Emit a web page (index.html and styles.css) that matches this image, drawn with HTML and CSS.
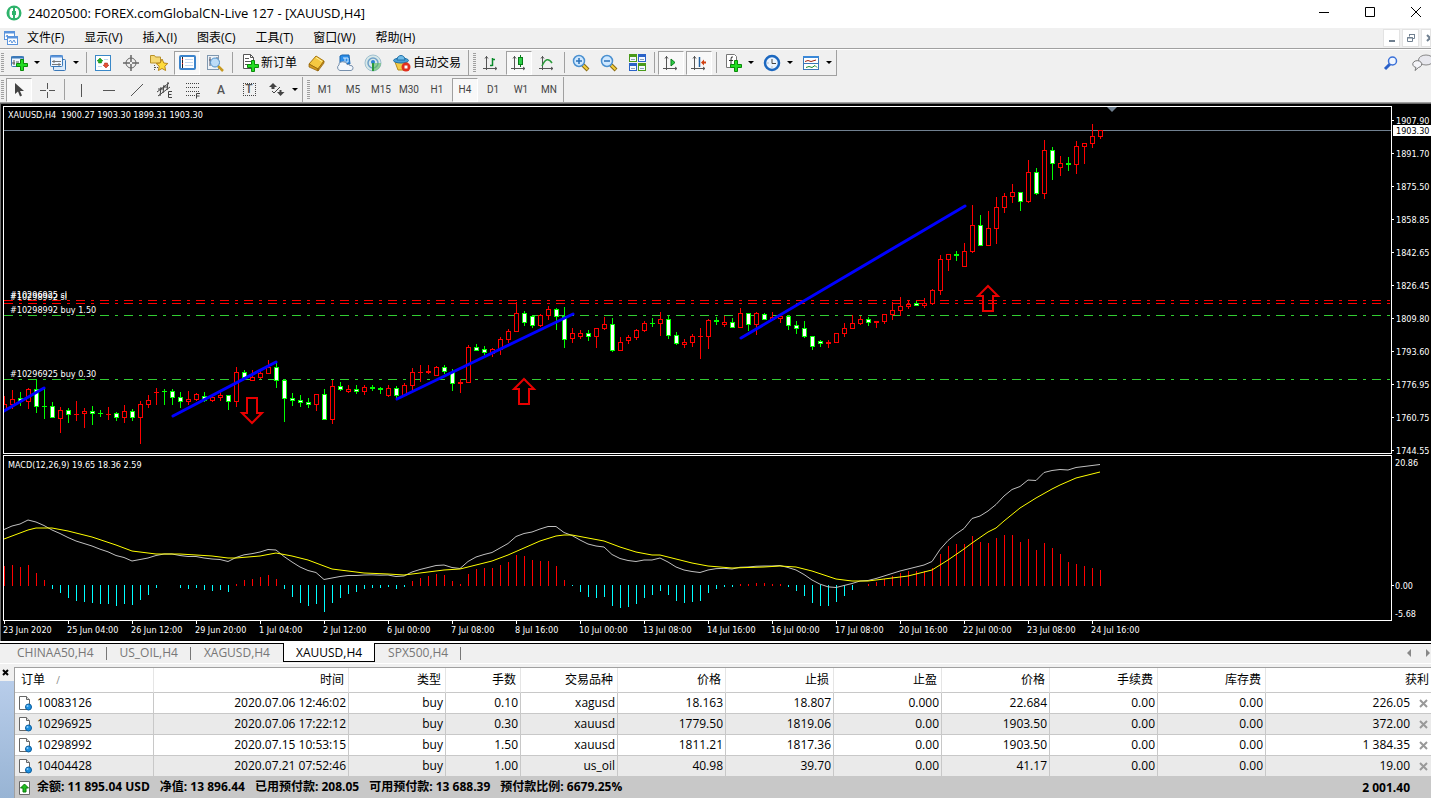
FILE: index.html
```html
<!DOCTYPE html>
<html lang="zh-CN">
<head>
    <meta charset="UTF-8">
    <title>24020500: FOREX.comGlobalCN-Live 127 - [XAUUSD,H4]</title>
    <link rel="stylesheet" href="styles.css">
</head>
<body>
    <svg class="defs" width="0" height="0">
        <symbol id="order" viewBox="0 0 14 16">
            <path d="M1.500 1.500h7l3 3v10h-10z" fill="#fff" stroke="#666"/>
            <path d="M8.500 1.500v3h3" fill="#ddd" stroke="#666"/>
            <circle cx="10.500" cy="12" r="3" fill="#1e90e0" stroke="#0a5c9c"/>
            <circle cx="9.500" cy="11" r="1" fill="#8cd0ff"/>
        </symbol>
        <symbol id="plus" viewBox="0 0 12 12">
            <path d="M4.500 .5h3v4h4v3h-4v4h-3v-4h-4v-3h4z" fill="#22dd22" stroke="#0a8a0a"/>
        </symbol>
        <symbol id="axes" viewBox="0 0 16 16">
            <path d="M3.500 1v14M0 13.500h14M2 3.500l1.500-2 1.500 2M12 12l2 1.500-2 1.500" fill="none" stroke="#555"/>
        </symbol>
        <symbol id="lens" viewBox="0 0 18 18">
            <path d="M11 11l5 5" stroke="#8a6a10" stroke-width="4"/>
            <path d="M11 11l4.500 4.500" stroke="#f5d040" stroke-width="2"/>
            <circle cx="7" cy="7" r="5.500" fill="#cfe8ff" stroke="#4a90d0" stroke-width="1.500"/>
        </symbol>
    </svg>

    <div class="title-bar">
        <svg width="16" height="16" viewBox="0 0 16 16">
            <circle cx="8" cy="8" r="7.500" fill="#2eb36b"/>
            <path d="M9 3c3 0 4 2 4 5s-1 5-4 5z" fill="#fff"/>
            <path d="M7 3c-3 0-3.500 2-3.500 5s.5 5 3.500 5z" fill="#fff"/>
            <path d="M6 6h4v4h-4z" fill="#2eb36b"/>
        </svg>
        <h1>24020500: FOREX.comGlobalCN-Live 127 - [XAUUSD,H4]</h1>
        <div class="window-buttons">
            <button title="最小化"><svg width="11" height="11"><path d="M0 5.500h10" stroke="#000"/></svg></button>
            <button title="最大化"><svg width="11" height="11"><path d="M.5 .5h9v9h-9z" fill="none" stroke="#000"/></svg></button>
            <button title="关闭"><svg width="11" height="11"><path d="M0 0l10 10M10 0l-10 10" stroke="#000"/></svg></button>
        </div>
    </div>

    <div class="menu-bar">
        <svg width="16" height="16" viewBox="0 0 16 16">
            <rect x="1.500" y="1.500" width="10" height="8" fill="#fff" stroke="#5b94dc"/>
            <path d="M1 2.500h11" stroke="#5b94dc" stroke-width="2"/>
            <rect x="4.500" y="6.500" width="10" height="8" fill="#fff" stroke="#5b94dc"/>
            <path d="M4 7.500h11" stroke="#5b94dc" stroke-width="2"/>
            <path d="M3 7l1-2 1 1M6 12l1.500-2 1.500 3 2-3 1.500 3" fill="none" stroke="#5b94dc"/>
        </svg>
        <div class="menu">
            <button>文件(F)</button>
            <button>显示(V)</button>
            <button>插入(I)</button>
            <button>图表(C)</button>
            <button>工具(T)</button>
            <button>窗口(W)</button>
            <button>帮助(H)</button>
        </div>
        <div class="mdi-buttons">
            <button title="最小化"><svg width="10" height="10"><path d="M2 8h6" stroke="#708090" stroke-width="2"/></svg></button>
            <button title="还原"><svg width="10" height="10"><path d="M3.500 3.500v-2h5v4h-2M1.500 4.500h5v4h-5zM3 1.500h6M1 5h6" fill="none" stroke="#708090"/></svg></button>
            <button title="关闭"><svg width="10" height="10"><path d="M2 2l6 6M8 2l-6 6" stroke="#708090" stroke-width="2"/></svg></button>
        </div>
    </div>

    <div class="toolbars">
        <div class="toolbar-row">
            <div class="toolbar boxed">
                <button class="drop" title="新图表">
                    <svg width="18" height="18" viewBox="0 0 18 18"><rect x="1.500" y="2.500" width="12" height="10" rx="1" fill="#eef6ff" stroke="#3a78b8"/><path d="M1 3.500h13" stroke="#3a78b8" stroke-width="2"/><path d="M4 6v5M2 9h3M6 8h3" stroke="#555"/><use href="#plus" x="6" y="5" width="12" height="12"/></svg>
                    <i class="caret"></i>
                </button>
                <button class="drop" title="配置文件">
                    <svg width="18" height="18" viewBox="0 0 18 18"><rect x="4.500" y="5.500" width="12" height="11" rx="1" fill="#dcebfa" stroke="#3a78b8"/><rect x="1.500" y="1.500" width="12" height="11" rx="1" fill="#eef6ff" stroke="#3a78b8"/><path d="M1 2.500h13" stroke="#5b94dc" stroke-width="2"/><path d="M3 7.500h9M3 10.500h9M5 6v3M10 9v3" stroke="#777"/></svg>
                    <i class="caret"></i>
                </button>
                <span class="separator"></span>
                <button title="市场报价">
                    <svg width="18" height="18" viewBox="0 0 18 18"><rect x="1.500" y="1.500" width="15" height="15" fill="#fff" stroke="#3a88c8"/><path d="M6 4l3 3-1.500 0v2h-3v-2h-1.500z" fill="#1fae1f" stroke="#0a7a0a" stroke-width=".5"/><path d="M12 14l3-3h-1.500v-2h-3v2h-1.500z" fill="#e85030" stroke="#a02010" stroke-width=".5"/><path d="M4 12.500h4M10 5.500h4" stroke="#bcd8ee"/></svg>
                </button>
                <button title="数据窗口">
                    <svg width="16" height="16" viewBox="0 0 16 16"><circle cx="8" cy="8" r="5" fill="none" stroke="#666"/><path d="M8 0v7M8 9v7M0 8h7M9 8h7" stroke="#666" stroke-width="1.500"/></svg>
                </button>
                <button title="导航">
                    <svg width="18" height="18" viewBox="0 0 18 18"><path d="M.5 3v-1.500h4l1 1.500h5v6h-10z" fill="#f5d873" stroke="#b8922a"/><path d="M4.500 11v6M5 13.500h3" stroke="#555" stroke-dasharray="1 1"/><path d="M12 5l1.800 4 4 .5-3 2.700.8 4.300-3.600-2-3.600 2 .8-4.300-3-2.700 4-.5z" fill="#ffdc3c" stroke="#b8861a"/></svg>
                </button>
                <button class="pressed" title="终端">
                    <svg width="17" height="15" viewBox="0 0 17 15"><rect x="1" y="1" width="15" height="13" rx="1" fill="#fff" stroke="#3c84cc" stroke-width="2"/><path d="M3.500 2v11" stroke="#222"/><path d="M3 4.500h1M3 8.500h1" stroke="#f22"/><path d="M6 4.500h8M6 7.500h8M6 10.500h8" stroke="#c4d8ee"/></svg>
                </button>
                <button title="策略测试">
                    <svg width="18" height="18" viewBox="0 0 18 18"><rect x="1.500" y="1.500" width="11" height="14" fill="#eef3f8" stroke="#8098b0"/><path d="M4 3v9M11 3v4M3 6h2" stroke="#556"/><path d="M12 12l5 5" stroke="#c89a20" stroke-width="2.500"/><circle cx="9" cy="8.500" r="4.500" fill="#bcdcf8" stroke="#5090c8"/></svg>
                </button>
                <span class="separator"></span>
                <button class="wide" title="新订单">
                    <svg width="18" height="18" viewBox="0 0 18 18"><path d="M2.500 .5h7l3 3v11h-10z" fill="#fff" stroke="#555"/><path d="M9.500 .5v3h3M4 4.500h4M4 7.500h6M4 10.500h4" fill="none" stroke="#555"/><use href="#plus" x="6" y="6" width="12" height="12"/></svg>
                    新订单
                </button>
                <button title="MetaEditor">
                    <svg width="18" height="18" viewBox="0 0 18 18"><path d="M1 10l7-8 8 5-6 8z" fill="#f5c842" stroke="#a87812"/><path d="M1 10v3l9 4v-2zM10 17l6-8v-2l-6 8z" fill="#d49a20" stroke="#8c5e08" stroke-width=".7"/><path d="M8 3.500l6 4" stroke="#fff0a0"/></svg>
                </button>
                <button title="虚拟主机">
                    <svg width="18" height="18" viewBox="0 0 18 18"><path d="M4 2l2-1h7l1 9h-10z" fill="#2a8ce8" stroke="#1664b0"/><path d="M7 4h5v4h-5M9 4v3" fill="none" stroke="#cfe8ff"/><path d="M4 16.500a3 3 0 0 1-1-5.500 4 3 0 0 1 8-.5 3 3 0 0 1 3 1 2.500 2.500 0 0 1 1 5z" fill="#f4f8fc" stroke="#7890ac"/></svg>
                </button>
                <button title="信号">
                    <svg width="18" height="18" viewBox="0 0 18 18"><circle cx="9" cy="9" r="8" fill="#d8e8e8" stroke="#a0c0d0"/><circle cx="9" cy="9" r="5" fill="none" stroke="#70a0c8" stroke-width="1.500"/><path d="M9 9h8a8 8 0 0 1-7 8z" fill="#5cba5c" opacity=".6"/><circle cx="9" cy="8" r="2" fill="#2a80d0"/><path d="M9 9v8" stroke="#2a9a3a" stroke-width="2"/></svg>
                </button>
                <button class="wide" title="自动交易">
                    <svg width="18" height="18" viewBox="0 0 18 18"><path d="M2 8h12l-3 8h-6z" fill="#f4cc48" stroke="#b88c1c"/><ellipse cx="8" cy="6.500" rx="7.500" ry="2.500" fill="#4aa0d8" stroke="#2070a8"/><path d="M4 6c0-6 8-6 8 0z" fill="#70bce8" stroke="#2070a8"/><circle cx="13" cy="13" r="4.500" fill="#e03020"/><path d="M11.500 11.500h3v3h-3z" fill="#fff"/></svg>
                    自动交易
                </button>
            </div>
            <div class="toolbar boxed">
                <button title="柱状图">
                    <svg width="16" height="16" viewBox="0 0 16 16"><use href="#axes" width="16" height="16"/><path d="M9.500 3v8M7 10.500h2.500M9.500 4.500h2.500" stroke="#0a8a2a" stroke-width="1.500"/></svg>
                </button>
                <button class="pressed" title="阴阳烛">
                    <svg width="16" height="16" viewBox="0 0 16 16"><use href="#axes" width="16" height="16"/><path d="M9.500 0v12" stroke="#0a7a1a"/><rect x="7.500" y="2.500" width="4" height="7" fill="#2ed048" stroke="#0a7a1a"/></svg>
                </button>
                <button title="折线图">
                    <svg width="16" height="16" viewBox="0 0 16 16"><use href="#axes" width="16" height="16"/><path d="M3 11q5-11 10-3" fill="none" stroke="#2a9a3a" stroke-width="1.500"/></svg>
                </button>
                <span class="separator"></span>
                <button title="放大">
                    <svg width="18" height="18" viewBox="0 0 18 18"><use href="#lens" width="18" height="18"/><path d="M4 7h6M7 4v6" stroke="#2a70b8" stroke-width="1.500"/></svg>
                </button>
                <button title="缩小">
                    <svg width="18" height="18" viewBox="0 0 18 18"><use href="#lens" width="18" height="18"/><path d="M4 7h6" stroke="#2a70b8" stroke-width="1.500"/></svg>
                </button>
                <button title="平铺窗口">
                    <svg width="17" height="17" viewBox="0 0 17 17"><path d="M0 0h8v8H0zM9 9h8v8H9z" fill="#4a9a1a"/><path d="M9 0h8v8H9zM0 9h8v8H0z" fill="#2a62c8"/><path d="M1 3h6v4H1zM10 3h6v4h-6zM1 12h6v4H1zM10 12h6v4h-6z" fill="#f4f8ff"/><path d="M2 5.500h4M11 5.500h4M2 14.500h4M11 14.500h4" stroke="#8aa0b8"/></svg>
                </button>
                <span class="separator"></span>
                <button class="pressed" title="自动滚动">
                    <svg width="16" height="16" viewBox="0 0 16 16"><use href="#axes" width="16" height="16"/><path d="M8 4l4 3.500-4 3.500z" fill="#2ed048" stroke="#0a7a1a"/></svg>
                </button>
                <button class="pressed" title="图表平移">
                    <svg width="16" height="16" viewBox="0 0 16 16"><use href="#axes" width="16" height="16"/><path d="M8.500 2v10" stroke="#2060a0" stroke-width="1.500"/><path d="M10 7.500l3-3v2h2v2h-2v2z" fill="#d04010"/></svg>
                </button>
                <span class="separator"></span>
                <button class="drop" title="技术指标">
                    <svg width="18" height="18" viewBox="0 0 18 18"><path d="M2.500 .5h8l2 2v11h-10z" fill="#fff" stroke="#777"/><path d="M9 3q-2-1-2 2v6M5 6.500h4" fill="none" stroke="#333"/><use href="#plus" x="6" y="6" width="12" height="12"/></svg>
                    <i class="caret"></i>
                </button>
                <button class="drop" title="时间周期">
                    <svg width="18" height="18" viewBox="0 0 18 18"><circle cx="9" cy="9" r="7" fill="#eaf4ff" stroke="#1c68c0" stroke-width="2.500"/><path d="M9 5V9.500h4" fill="none" stroke="#444"/><path d="M4.500 9h1M9 12.500v1" stroke="#888"/></svg>
                    <i class="caret"></i>
                </button>
                <button class="drop" title="模板">
                    <svg width="18" height="16" viewBox="0 0 18 16"><rect x="1.500" y="1.500" width="15" height="13" fill="#fff" stroke="#3a78b8"/><path d="M1 2h16" stroke="#3a88d8" stroke-width="2"/><path d="M3 6.500l3-1 3 1 5-1.500" fill="none" stroke="#a02010"/><path d="M2 8.500h14" stroke="#3a78b8"/><path d="M4 12.500l3-1 3 1 3-2 2 2" fill="none" stroke="#1a8a2a"/></svg>
                    <i class="caret"></i>
                </button>
            </div>
            <div class="toolbar-right">
                <button title="搜索">
                    <svg width="16" height="16" viewBox="0 0 16 16"><path d="M7 9l-5 5" stroke="#2a60c8" stroke-width="3"/><circle cx="9.500" cy="6" r="4" fill="#f0f6ff" stroke="#3a70d8" stroke-width="1.500"/></svg>
                </button>
                <button title="聊天">
                    <svg width="22" height="18" viewBox="0 0 22 18"><ellipse cx="15" cy="6" rx="7.500" ry="5" fill="#e8e8ee" stroke="#888"/><path d="M5 13.500l-1 3 3.500-3a4.500 3.500 0 1 0-2.500 0z" fill="#f4f4f8" stroke="#777"/></svg>
                </button>
            </div>
        </div>
        <div class="toolbar-row">
            <div class="toolbar">
                <button class="pressed" title="光标">
                    <svg width="12" height="16" viewBox="0 0 12 16"><path d="M2 1v11l3-2.500 2 5 2-1-2-4.500h4z" fill="#444"/></svg>
                </button>
                <button title="十字准线">
                    <svg width="16" height="16"><path d="M8.500 1v6M8.500 10v6M1 8.500h6M10 8.500h6" stroke="#555"/></svg>
                </button>
                <span class="separator"></span>
                <button title="垂直线"><svg width="16" height="16"><path d="M8.500 2v13" stroke="#555"/></svg></button>
                <button title="水平线"><svg width="16" height="16"><path d="M2 8.500h12" stroke="#555"/></svg></button>
                <button title="趋势线"><svg width="16" height="16"><path d="M2 14l12-12" stroke="#555"/></svg></button>
                <button title="等距通道">
                    <svg width="18" height="18" viewBox="0 0 18 18"><path d="M1 11l12-9M2 15l12-9M5 6l-1 9M8 4l-1 8M12 1l-1 8M2 8h5M7 6h5" stroke="#444" fill="none"/><path d="M16 10.500h-3.500v6h3.500M12 13.500h3.500" fill="none" stroke="#444"/></svg>
                </button>
                <button title="斐波纳契回调">
                    <svg width="18" height="18" viewBox="0 0 18 18"><path d="M2 2.500h14M2 6.500h14M2 10.500h14M2 14.500h9" stroke="#444" stroke-dasharray="1 1"/><path d="M16 12.500h-3.500v5M12 15h3.500" fill="none" stroke="#444"/></svg>
                </button>
                <button class="letter" title="文字">A</button>
                <button class="letter" title="文字标签"><span class="label-box">T</span></button>
                <button class="drop" title="箭头">
                    <svg width="18" height="18" viewBox="0 0 18 18"><path d="M5 2l4 4h-2.500v2h-3v-2h-2.500zM9 11h2.500v-2h2v2h3l-4 4z" fill="#444"/><path d="M4 10l2 2 6-6" fill="none" stroke="#444"/></svg>
                    <i class="caret"></i>
                </button>
            </div>
            <div class="toolbar periods">
                <button>M1</button>
                <button>M5</button>
                <button>M15</button>
                <button>M30</button>
                <button>H1</button>
                <button class="pressed">H4</button>
                <button>D1</button>
                <button>W1</button>
                <button>MN</button>
            </div>
        </div>
    </div>

    <div class="chart">
        <svg class="pane" id="pricePane" height="348"></svg>
        <svg class="scale" id="priceScale" height="348"></svg>
        <svg class="pane" id="macdPane" height="166"></svg>
        <svg class="scale" id="macdScale" height="166"></svg>
        <ol class="time-axis">
            <li>23 Jun 2020</li>
            <li>25 Jun 04:00</li>
            <li>26 Jun 12:00</li>
            <li>29 Jun 20:00</li>
            <li>1 Jul 04:00</li>
            <li>2 Jul 12:00</li>
            <li>6 Jul 00:00</li>
            <li>7 Jul 08:00</li>
            <li>8 Jul 16:00</li>
            <li>10 Jul 00:00</li>
            <li>13 Jul 08:00</li>
            <li>14 Jul 16:00</li>
            <li>16 Jul 00:00</li>
            <li>17 Jul 08:00</li>
            <li>20 Jul 16:00</li>
            <li>22 Jul 00:00</li>
            <li>23 Jul 08:00</li>
            <li>24 Jul 16:00</li>
        </ol>
    </div>

    <div class="chart-tabs">
        <button>CHINAA50,H4</button>
        <button>US_OIL,H4</button>
        <button class="before-active">XAGUSD,H4</button>
        <button class="active">XAUUSD,H4</button>
        <button>SPX500,H4</button>
        <div class="tab-scroll">
            <button title="向左"><svg width="4" height="8"><path d="M4 0v8l-4-4z" fill="#888"/></svg></button>
            <button title="向右"><svg width="4" height="8"><path d="M0 0v8l4-4z" fill="#888"/></svg></button>
        </div>
    </div>

    <div class="terminal">
        <div class="rail">
            <button title="关闭"><svg width="7" height="7"><path d="M1 1l5 5M6 1l-5 5" stroke="#000" stroke-width="2"/></svg></button>
        </div>
        <table>
            <colgroup>
                <col class="c-order"><col class="c-time"><col class="c-type"><col class="c-lots"><col class="c-type">
                <col class="c-price"><col class="c-price"><col class="c-price"><col class="c-price"><col class="c-price"><col class="c-price"><col>
            </colgroup>
            <thead>
                <tr>
                    <th class="order">订单 <span class="sort">/</span></th>
                    <th>时间</th>
                    <th>类型</th>
                    <th>手数</th>
                    <th>交易品种</th>
                    <th>价格</th>
                    <th>止损</th>
                    <th>止盈</th>
                    <th>价格</th>
                    <th>手续费</th>
                    <th>库存费</th>
                    <th class="profit-head">获利</th>
                </tr>
            </thead>
            <tbody>
                <tr>
                    <td class="order"><svg width="14" height="16"><use href="#order"/></svg>10083126</td>
                    <td>2020.07.06 12:46:02</td><td>buy</td><td>0.10</td><td>xagusd</td><td>18.163</td><td>18.807</td><td>0.000</td><td>22.684</td><td>0.00</td><td>0.00</td>
                    <td class="profit">226.05<button title="平仓"><svg width="9" height="9"><path d="M1 1l7 7M8 1l-7 7" stroke="#999" stroke-width="2"/></svg></button></td>
                </tr>
                <tr>
                    <td class="order"><svg width="14" height="16"><use href="#order"/></svg>10296925</td>
                    <td>2020.07.06 17:22:12</td><td>buy</td><td>0.30</td><td>xauusd</td><td>1779.50</td><td>1819.06</td><td>0.00</td><td>1903.50</td><td>0.00</td><td>0.00</td>
                    <td class="profit">372.00<button title="平仓"><svg width="9" height="9"><path d="M1 1l7 7M8 1l-7 7" stroke="#999" stroke-width="2"/></svg></button></td>
                </tr>
                <tr>
                    <td class="order"><svg width="14" height="16"><use href="#order"/></svg>10298992</td>
                    <td>2020.07.15 10:53:15</td><td>buy</td><td>1.50</td><td>xauusd</td><td>1811.21</td><td>1817.36</td><td>0.00</td><td>1903.50</td><td>0.00</td><td>0.00</td>
                    <td class="profit">1 384.35<button title="平仓"><svg width="9" height="9"><path d="M1 1l7 7M8 1l-7 7" stroke="#999" stroke-width="2"/></svg></button></td>
                </tr>
                <tr>
                    <td class="order"><svg width="14" height="16"><use href="#order"/></svg>10404428</td>
                    <td>2020.07.21 07:52:46</td><td>buy</td><td>1.00</td><td>us_oil</td><td>40.98</td><td>39.70</td><td>0.00</td><td>41.17</td><td>0.00</td><td>0.00</td>
                    <td class="profit">19.00<button title="平仓"><svg width="9" height="9"><path d="M1 1l7 7M8 1l-7 7" stroke="#999" stroke-width="2"/></svg></button></td>
                </tr>
            </tbody>
            <tfoot>
                <tr>
                    <td class="order" colspan="11">
                        <svg width="14" height="16"><path d="M1.500 1.500h10v13h-10z" fill="#fff" stroke="#666"/><path d="M6.500 4l4 4h-2.500v4h-3v-4h-2.500z" fill="#1fbe1f" stroke="#0a7a0a"/></svg><span>余额: 11 895.04 USD</span><span>净值: 13 896.44</span><span>已用预付款: 208.05</span><span>可用预付款: 13 688.39</span><span>预付款比例: 6679.25%</span>
                    </td>
                    <td class="profit">2 001.40</td>
                </tr>
            </tfoot>
        </table>
    </div>

    <script src="chart.js"></script>
</body>
</html>
```
FILE: styles.css
```css
* {
    box-sizing: border-box;
}
body {
    margin: 0;
    min-height: 100vh;
    display: flex;
    flex-direction: column;
    overflow: hidden;
    background-color: #f0f0f0;
    color: #000;
    font-family: "Open Sans", "Noto Sans CJK SC", sans-serif;
    font-size: 12px;
    line-height: 16px;
}
button {
    margin: 0;
    padding: 0;
    border: none;
    background: none;
    color: inherit;
    font: inherit;
    white-space: nowrap;
}
svg {
    display: block;
    flex: none;
}
.defs {
    position: absolute;
}

/* title and menu */
.title-bar {
    display: flex;
    align-items: center;
    height: 28px;
    padding: 0 0 3px 6px;
    background-color: #fff;
}
.title-bar h1 {
    margin: 0 0 0 6px;
    font-size: 13px;
    font-weight: normal;
}
.window-buttons {
    display: flex;
    gap: 16px;
    margin-left: auto;
}
.window-buttons button {
    display: flex;
    align-items: center;
    justify-content: center;
    width: 30px;
    height: 24px;
}
.menu-bar {
    display: flex;
    align-items: center;
    height: 21px;
    padding-left: 3px;
    border-bottom: 1px solid #a0a0a0;
}
.menu {
    display: flex;
    margin-left: -2px;
}
.menu button {
    padding: 0 10px;
}
.menu button:hover {
    background-color: #d8e8f8;
}
.mdi-buttons {
    display: flex;
    gap: 2px;
    margin-left: auto;
}
.mdi-buttons button {
    width: 17px;
    height: 18px;
    padding: 3px;
    border: 1px solid #e3e3e3;
    background-color: #fff;
}
.mdi-buttons button:last-child {
    width: 10px;
    overflow: hidden;
}

/* toolbars */
.toolbars {
    border-top: 1px solid #fff;
    border-bottom: 1px solid #a0a0a0;
}
.toolbar-row {
    display: flex;
    height: 27px;
}
.toolbar-row + .toolbar-row {
    height: 25px;
}
.toolbar {
    display: flex;
    align-items: center;
    border-right: 1px solid #a0a0a0;
}
.toolbar.boxed {
    height: 26px;
    border-bottom: 1px solid #a0a0a0;
}
.toolbar::before {
    content: "";
    width: 3px;
    height: 19px;
    margin: 0 1px;
    background: repeating-linear-gradient(#a0a0a0 0 1px, #f0f0f0 1px 2px);
}
.toolbar + .toolbar::before {
    margin: 0 1px 0 4px;
}
.toolbar button {
    display: flex;
    align-items: center;
    justify-content: center;
    width: 26px;
    height: 24px;
    margin: 0 1px;
    border: 1px solid transparent;
}
.toolbar button:hover {
    border-color: #fff #a0a0a0 #a0a0a0 #fff;
}
.toolbar button.pressed {
    border-color: #a0a0a0 #fff #fff #a0a0a0;
    background-color: #f8f8f8;
}
.toolbar button.drop {
    width: 37px;
    gap: 6px;
}
.toolbar button.wide {
    width: auto;
    padding: 0 4px;
    gap: 2px;
}
.toolbar button.wide:last-child {
    padding-right: 5px;
}
.caret {
    border: 3px solid transparent;
    border-top-color: #000;
    border-bottom: none;
}
.separator {
    width: 1px;
    height: 21px;
    margin: 0 2px 0 3px;
    background-color: #a0a0a0;
}
.toolbar button.letter {
    color: #555;
    font-family: Roboto, sans-serif;
    font-weight: 500;
}
.label-box {
    width: 13px;
    height: 13px;
    border: 1px dotted #444;
    line-height: 11px;
}
.periods {
    font-family: Roboto, sans-serif;
    font-size: 10px;
    color: #444;
}
.toolbar-right {
    display: flex;
    align-items: center;
    gap: 12px;
    height: 26px;
    margin-left: auto;
}
.toolbar-right button:last-child {
    width: 20px;
    overflow: hidden;
}

/* chart */
.chart {
    display: grid;
    grid-template-columns: 1fr 39px;
    row-gap: 1px;
    padding: 2px 0 0 2px;
    border-top: 1px solid #696969;
    border-left: 1px solid #696969;
    background-color: #000;
    font-family: "DejaVu Sans Condensed", "DejaVu Sans", sans-serif;
    font-size: 9px;
    fill: #fff;
    color: #fff;
}
.chart text {
    white-space: pre;
}
.pane {
    width: 100%;
    border: 1px solid #fff;
}
.scale {
    width: 100%;
    overflow: visible;
}
.time-axis {
    display: flex;
    height: 20px;
    margin: -1px 0 0;
    padding: 0;
    list-style: none;
    line-height: 12px;
}
.time-axis li {
    flex: none;
    width: 64px;
    white-space: nowrap;
}
.time-axis li::before {
    content: "";
    display: block;
    width: 1px;
    height: 3px;
    margin-left: 1px;
    background-color: #fff;
}

/* chart tabs */
.chart-tabs {
    display: flex;
    height: 23px;
    padding-left: 4px;
    border-top: 2px solid #fff;
    border-bottom: 1px solid #fff;
    box-shadow: inset 0 1px #000;
    color: #777;
}
.chart-tabs > button {
    position: relative;
    height: 19px;
    padding: 1px 13px 0;
}
.chart-tabs > button::after {
    content: "";
    position: absolute;
    top: 4px;
    right: 0;
    width: 1px;
    height: 13px;
    background-color: #777;
}
.chart-tabs > button.active {
    padding: 1px 12px 0;
    border: 1px solid #000;
    border-top: none;
    background-color: #fff;
    color: #000;
}
.chart-tabs > .active::after,
.chart-tabs > .before-active::after {
    display: none;
}
.tab-scroll {
    display: flex;
    gap: 15px;
    margin-left: auto;
    padding-right: 1px;
}

/* terminal */
.terminal {
    display: flex;
    flex: 1;
    margin-top: 3px;
}
.rail {
    flex: none;
    width: 14px;
    padding-top: 14px;
    background: linear-gradient(#b8cdea, #98b4d4) content-box;
}
.rail button {
    display: block;
    height: 14px;
    margin: -14px 0 0;
    padding: 0 0 3px 2px;
}
table {
    flex: 1;
    width: 0;
    table-layout: fixed;
    border-collapse: separate;
    border-spacing: 0;
    border-top: 1px solid #a0a0a0;
    border-left: 1px solid #a0a0a0;
    background-color: #fff;
}
.c-order {
    width: 139px;
}
.c-time {
    width: 195px;
}
.c-type {
    width: 97px;
}
.c-lots {
    width: 75px;
}
.c-price {
    width: 108px;
}
th,
td {
    height: 21px;
    padding: 0 2px 0 0;
    border-right: 1px solid #c8c8c8;
    border-bottom: 1px solid #c8c8c8;
    text-align: right;
    font-weight: normal;
    white-space: nowrap;
}
th {
    height: 25px;
    padding-right: 4px;
    border-right-color: #e5e5e5;
}
th:last-child,
td:last-child {
    border-right: none;
}
th.order {
    padding-left: 6px;
    text-align: left;
}
th.profit-head {
    padding-right: 2px;
}
.sort {
    margin-left: 8px;
    color: #888;
    font-size: 10px;
}
tbody tr:nth-child(even) {
    background-color: #eaeaea;
}
td.order {
    padding-left: 3px;
    text-align: left;
}
td.order svg {
    display: inline-block;
    margin-right: 5px;
    vertical-align: middle;
}
td.profit {
    padding-right: 21px;
}
td.profit button {
    width: 9px;
    margin: 0 -14px 0 5px;
    vertical-align: middle;
}
td.profit button svg {
    margin-left: 4px;
}
tfoot td {
    border: none;
    background-color: #c8c8c8;
    font-weight: bold;
}
tfoot span {
    margin-right: 10px;
}
```
FILE: chart.js
```javascript
var STEP = 8;

// direction (r up, g down), high, body top, body bottom, low
var candles = [
    "r 396 404 409 411", "r 390 399 404 409", "g 392 398 401 406", "r 388 389 401 409", "g 379 389 406 413", "g 388 406 406 419",
    "g 402 406 417 418", "r 407 410 418 433", "g 408 410 414 423", "r 401 414 414 421", "r 408 411 413 428", "g 406 411 413 425",
    "g 410 413 413 417", "r 407 414 414 420", "g 412 413 417 421", "r 405 411 417 423", "g 409 411 417 421", "r 401 404 417 444",
    "r 395 400 404 408", "r 388 392 392 405", "g 389 391 391 405", "g 389 391 397 405", "g 392 397 401 408", "r 391 399 401 405",
    "r 393 394 399 401", "g 392 396 400 402", "r 396 397 400 402", "r 392 395 397 401", "g 395 395 401 410", "r 367 372 401 407",
    "g 370 372 377 380", "r 370 377 380 381", "r 371 373 377 379", "r 360 367 373 374", "g 361 367 380 388", "g 379 380 398 422",
    "g 393 398 400 406", "g 395 400 402 407", "g 398 402 404 408", "r 394 394 404 411", "g 389 394 419 419", "r 380 386 419 424",
    "g 382 386 389 391", "r 385 389 391 393", "g 385 389 391 394", "r 385 387 391 395", "g 385 387 388 391", "g 387 388 389 394",
    "r 385 388 395 397", "g 386 388 395 398", "r 383 385 395 396", "r 368 372 385 390", "r 365 372 372 382", "r 365 371 372 374",
    "r 366 367 375 376", "g 365 367 371 374", "g 369 372 383 391", "r 379 382 383 393", "r 345 347 382 383", "g 344 347 350 351",
    "g 346 349 352 355", "r 348 349 353 357", "r 337 339 349 355", "r 329 331 339 343", "r 302 313 331 332", "g 311 313 322 326",
    "g 315 316 325 328", "r 314 315 325 327", "r 306 309 315 320", "g 308 309 316 330", "g 307 316 339 348", "r 328 333 338 343",
    "r 330 333 336 339", "g 330 333 336 341", "r 328 328 336 348", "r 317 324 328 330", "g 318 324 350 352", "r 337 342 350 351",
    "r 335 337 340 344", "r 329 330 337 340", "r 321 323 330 332", "g 318 323 323 327", "r 312 319 323 336", "g 316 319 335 339",
    "g 332 335 343 345", "r 339 342 344 348", "r 334 336 342 347", "r 328 336 336 359", "r 319 320 336 349", "g 317 320 321 325",
    "r 316 322 324 327", "g 318 322 327 328", "r 308 313 327 327", "g 313 313 324 331", "r 312 313 324 335", "g 313 314 319 320",
    "r 312 317 319 320", "r 315 316 318 323", "g 315 316 325 330", "g 321 325 328 334", "g 321 328 336 338", "g 336 336 346 350",
    "g 340 341 343 347", "r 340 342 343 348", "r 333 333 342 343", "r 323 328 333 337", "r 315 323 328 329", "r 316 319 323 325",
    "g 317 319 322 326", "r 321 321 322 328", "r 314 314 321 324", "r 302 310 314 320", "r 297 306 310 316", "r 301 304 306 309",
    "g 301 303 305 306", "r 298 303 305 308", "r 289 290 303 305", "r 255 259 290 295", "r 254 254 259 271", "g 251 254 255 261",
    "r 243 251 266 267", "r 205 225 251 253", "g 215 225 245 246", "r 211 228 245 246", "r 197 207 228 244", "r 193 196 207 213",
    "r 184 192 196 203", "g 192 192 201 211", "r 160 172 201 203", "g 168 172 193 195", "r 140 150 193 199", "g 147 150 163 180",
    "r 156 163 167 176", "g 157 163 164 171", "r 141 146 164 174", "r 143 143 146 164", "r 124 136 143 148", "r 130 130 136 139"
];

var histogram = [
    19, 20, 18, 20, 12, 5, -4, -8, -13, -16, -17, -18, -19, -19, -21, -19, -20, -15, -10, -3,
    0, 0, -3, -4, -3, -5, -6, -5, -7, 1, 5, 6, 8, 10, 6, -4, -12, -18, -21, -19,
    -27, -18, -13, -9, -7, -4, -3, -3, -2, -4, -2, 4, 7, 9, 11, 10, 4, 1, 11, 16,
    17, 17, 20, 23, 30, 29, 25, 24, 24, 19, 5, -1, -7, -12, -13, -12, -21, -23, -22, -19,
    -13, -10, -6, -10, -16, -18, -17, -16, -8, -4, -2, -2, 1, 1, 2, 2, 1, 1, -2, -6,
    -11, -18, -21, -21, -17, -11, -5, 0, 1, 3, 6, 9, 12, 14, 14, 14, 17, 31, 39, 41,
    41, 49, 43, 42, 47, 50, 50, 43, 46, 35, 42, 37, 31, 23, 21, 19, 17, 15
];

// signal line knots: bar, y
var signal = [
    [0, 539], [2, 533], [3, 530], [4, 528], [6, 528], [8, 531], [11, 537], [14, 545], [16, 551], [18, 553], [19, 554],
    [22, 554], [24, 555], [26, 556], [28, 558], [29, 558], [32, 556], [34, 553], [36, 556], [38, 560], [40, 566],
    [41, 569], [43, 571], [45, 573], [48, 574], [50, 575], [51, 574], [55, 570], [57, 569], [58, 567], [61, 561],
    [63, 555], [65, 548], [67, 541], [69, 536], [70, 535], [71, 535], [73, 538], [75, 541], [77, 547], [79, 552],
    [81, 555], [82, 555], [84, 559], [86, 563], [88, 566], [91, 568], [95, 567], [97, 566], [99, 567], [101, 571],
    [104, 579], [106, 581], [108, 581], [110, 579], [113, 576], [116, 570], [118, 560], [120, 549], [121, 543],
    [123, 532], [124, 528], [125, 521], [127, 508], [129, 498], [131, 489], [132, 485], [134, 478], [137, 472]
];

var prices = ["1907.90", "1891.70", "1875.50", "1858.85", "1842.65", "1826.45", "1809.80", "1793.60", "1776.95", "1760.75", "1744.55"];

function add(parent, name, attrs, text) {
    var el = document.createElementNS("http://www.w3.org/2000/svg", name);
    for (var key in attrs) {
        el.setAttribute(key, attrs[key]);
    }
    if (text) {
        el.textContent = text;
    }
    parent.appendChild(el);
    return el;
}

function drawLevel(pane, y, color, dash) {
    add(pane, "line", { x1: 0, x2: "100%", y1: y + 0.5, y2: y + 0.5, stroke: color, "stroke-dasharray": dash });
}

function drawCandles(pane) {
    candles.forEach(function (row, i) {
        var c = row.split(" ");
        var high = +c[1], top = +c[2], bottom = +c[3], low = +c[4];
        var x = i * STEP;
        var color = c[0] === "r" ? "#ff0000" : "#00ff00";
        add(pane, "rect", { x: x, y: high, width: 1, height: Math.max(low - high, 1), fill: color });
        if (bottom - top < 2) {
            add(pane, "rect", { x: x - 2, y: top, width: 5, height: bottom - top + 1, fill: color });
        } else {
            add(pane, "rect", {
                x: x - 1.5, y: top + 0.5, width: 4, height: bottom - top,
                fill: c[0] === "r" ? "#000" : "#fff", stroke: color
            });
        }
    });
}

function drawTrend(pane, x1, y1, x2, y2) {
    add(pane, "line", { x1: x1, y1: y1, x2: x2, y2: y2, stroke: "#0000ff", "stroke-width": 3, "stroke-linecap": "round" });
}

function drawArrow(pane, x, y, down) {
    var d = down ? "M-5 1h10v15h5l-10 10l-10-10h5z" : "M0 1l10 10h-5v15h-10v-15h-5z";
    add(pane, "path", { d: d, fill: "none", stroke: "#e80000", "stroke-width": 2, transform: "translate(" + x + " " + y + ")" });
}

function drawPricePane() {
    var pane = add(document.getElementById("pricePane"), "g", { transform: "translate(0 -107)" });
    drawLevel(pane, 130, "#708090", "none");
    drawLevel(pane, 300, "#ff0000", "9 6 3 6");
    drawLevel(pane, 303, "#ff0000", "9 6 3 6");
    drawLevel(pane, 315, "#32cd32", "9 6 3 6");
    drawLevel(pane, 379, "#32cd32", "9 6 3 6");
    drawCandles(pane);
    drawTrend(pane, 0, 411, 40, 388);
    drawTrend(pane, 169, 416, 272, 362);
    drawTrend(pane, 393, 399, 569, 314);
    drawTrend(pane, 737, 338, 961, 206);
    drawArrow(pane, 248, 397, true);
    drawArrow(pane, 520, 378, false);
    drawArrow(pane, 984, 285, false);
    add(pane, "path", { d: "M1103 107h10l-5 5z", fill: "#708090" });
    add(pane, "text", { x: 4, y: 118 }, "XAUUSD,H4  1900.27 1903.30 1899.31 1903.30");
    add(pane, "text", { x: 6, y: 298 }, "#10296925 sl");
    add(pane, "text", { x: 6, y: 300 }, "#10298992 sl");
    add(pane, "text", { x: 6, y: 313 }, "#10298992 buy 1.50");
    add(pane, "text", { x: 6, y: 377 }, "#10296925 buy 0.30");
}

function drawMacdPane() {
    var pane = add(document.getElementById("macdPane"), "g", { transform: "translate(0 -456)" });
    var macdPoints = [], signalPoints = [], knot = 0;
    histogram.forEach(function (h, i) {
        var x = i * STEP;
        if (h > 0) {
            add(pane, "rect", { x: x, y: 585 - h, width: 1, height: h + 1, fill: "#ff0000" });
        } else if (h < 0) {
            add(pane, "rect", { x: x, y: 585, width: 1, height: -h, fill: "#00ffff" });
        }
        while (knot < signal.length - 2 && signal[knot + 1][0] <= i) {
            knot++;
        }
        var a = signal[knot], b = signal[knot + 1];
        var y = a[1] + (b[1] - a[1]) * (i - a[0]) / (b[0] - a[0]);
        signalPoints.push(x + "," + y);
        macdPoints.push(x + "," + (y - h / 2));
    });
    add(pane, "polyline", { points: macdPoints.join(" "), fill: "none", stroke: "#c0c0c0" });
    add(pane, "polyline", { points: signalPoints.join(" "), fill: "none", stroke: "#ffff00" });
    add(pane, "text", { x: 4, y: 468 }, "MACD(12,26,9) 19.65 18.36 2.59");
}

function drawScales() {
    var scale = document.getElementById("priceScale");
    prices.forEach(function (price, i) {
        var y = 14 + i * 33;
        add(scale, "rect", { x: 0, y: y, width: 2, height: 1 });
        add(scale, "text", { x: 4, y: y + 4 }, price);
    });
    add(scale, "rect", { x: 1, y: 19, width: 38, height: 11 });
    add(scale, "text", { x: 4, y: 28, fill: "#000" }, "1903.30");

    scale = document.getElementById("macdScale");
    add(scale, "text", { x: 3, y: 11 }, "20.86");
    add(scale, "rect", { x: 0, y: 130, width: 2, height: 1 });
    add(scale, "text", { x: 3, y: 134 }, "0.00");
    add(scale, "text", { x: 3, y: 162 }, "-5.68");
}

drawPricePane();
drawMacdPane();
drawScales();
```
